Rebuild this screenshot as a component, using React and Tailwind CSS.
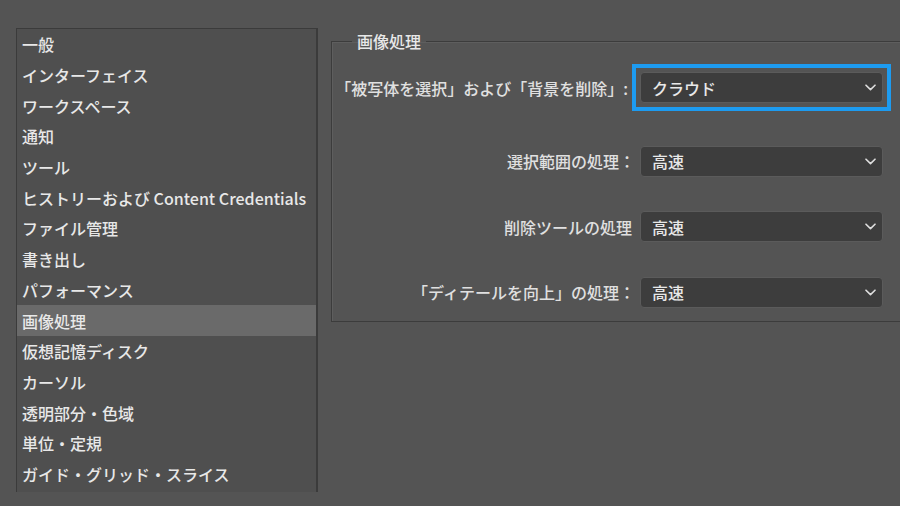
import React from "react";

const items = [
  "一般",
  "インターフェイス",
  "ワークスペース",
  "通知",
  "ツール",
  "ヒストリーおよび Content Credentials",
  "ファイル管理",
  "書き出し",
  "パフォーマンス",
  "画像処理",
  "仮想記憶ディスク",
  "カーソル",
  "透明部分・色域",
  "単位・定規",
  "ガイド・グリッド・スライス",
];

function Chevron() {
  return (
    <svg width="11" height="7" viewBox="0 0 11 7" className="shrink-0">
      <polyline points="1,1.2 5.5,5.6 10,1.2" fill="none" stroke="#dedede" strokeWidth="1.6" strokeLinecap="round" strokeLinejoin="round" />
    </svg>
  );
}

function Select({ value }) {
  return (
    <div className="w-[243px] h-[31px] rounded-[4px] bg-[#3d3d3d] border border-[#5b5b5b] flex items-center justify-between pl-[11px] pr-[6px] text-[16px] text-[#e8e8e8]">
      <span>{value}</span>
      <Chevron />
    </div>
  );
}

export default function App() {
  return (
    <div
      className="w-[900px] h-[506px] overflow-hidden bg-[#545454] flex items-start text-[#e8e8e8] font-medium"
      style={{ fontFamily: '"Noto Sans CJK JP", "Noto Sans", sans-serif' }}
    >
      <div className="shrink-0 ml-4 mt-[28px] w-[302px] h-[464px] bg-[#4f4f4f] border-l border-t border-r-2 border-[#3b3b3b] flex flex-col">
        {items.map((t) => (
          <div
            key={t}
            className={
              "h-[30.7px] shrink-0 flex items-center pl-[5px] text-[16px] leading-none whitespace-nowrap " +
              (t === "画像処理" ? "bg-[#6a6a6a]" : "")
            }
          >
            {t}
          </div>
        ))}
      </div>

      <fieldset className="shrink-0 ml-[13px] mt-[30px] w-[580px] border border-[#3c3c3c] pr-[27px] pb-[13px] shadow-[inset_1px_1px_0_#5e5e5e]">
        <legend className="ml-[20px] px-[5px] text-[16px] leading-[22px] text-[#e8e8e8]">画像処理</legend>
        <div className="flex flex-col items-end gap-[34.5px] mt-[12px] text-[16px] text-[#e0e0e0]">
          <div className="flex items-center -mr-2">
            <span className="mr-[4px] whitespace-nowrap">「被写体を選択」および「背景を削除」:</span>
            <div className="border-4 border-[#1d9bf0] p-1">
              <Select value="クラウド" />
            </div>
          </div>
          <div className="flex items-center gap-[5px]">
            <span className="whitespace-nowrap">選択範囲の処理：</span>
            <Select value="高速" />
          </div>
          <div className="flex items-center gap-[8px]">
            <span className="whitespace-nowrap">削除ツールの処理</span>
            <Select value="高速" />
          </div>
          <div className="flex items-center gap-[5px]">
            <span className="whitespace-nowrap">「ディテールを向上」の処理：</span>
            <Select value="高速" />
          </div>
        </div>
      </fieldset>
    </div>
  );
}
